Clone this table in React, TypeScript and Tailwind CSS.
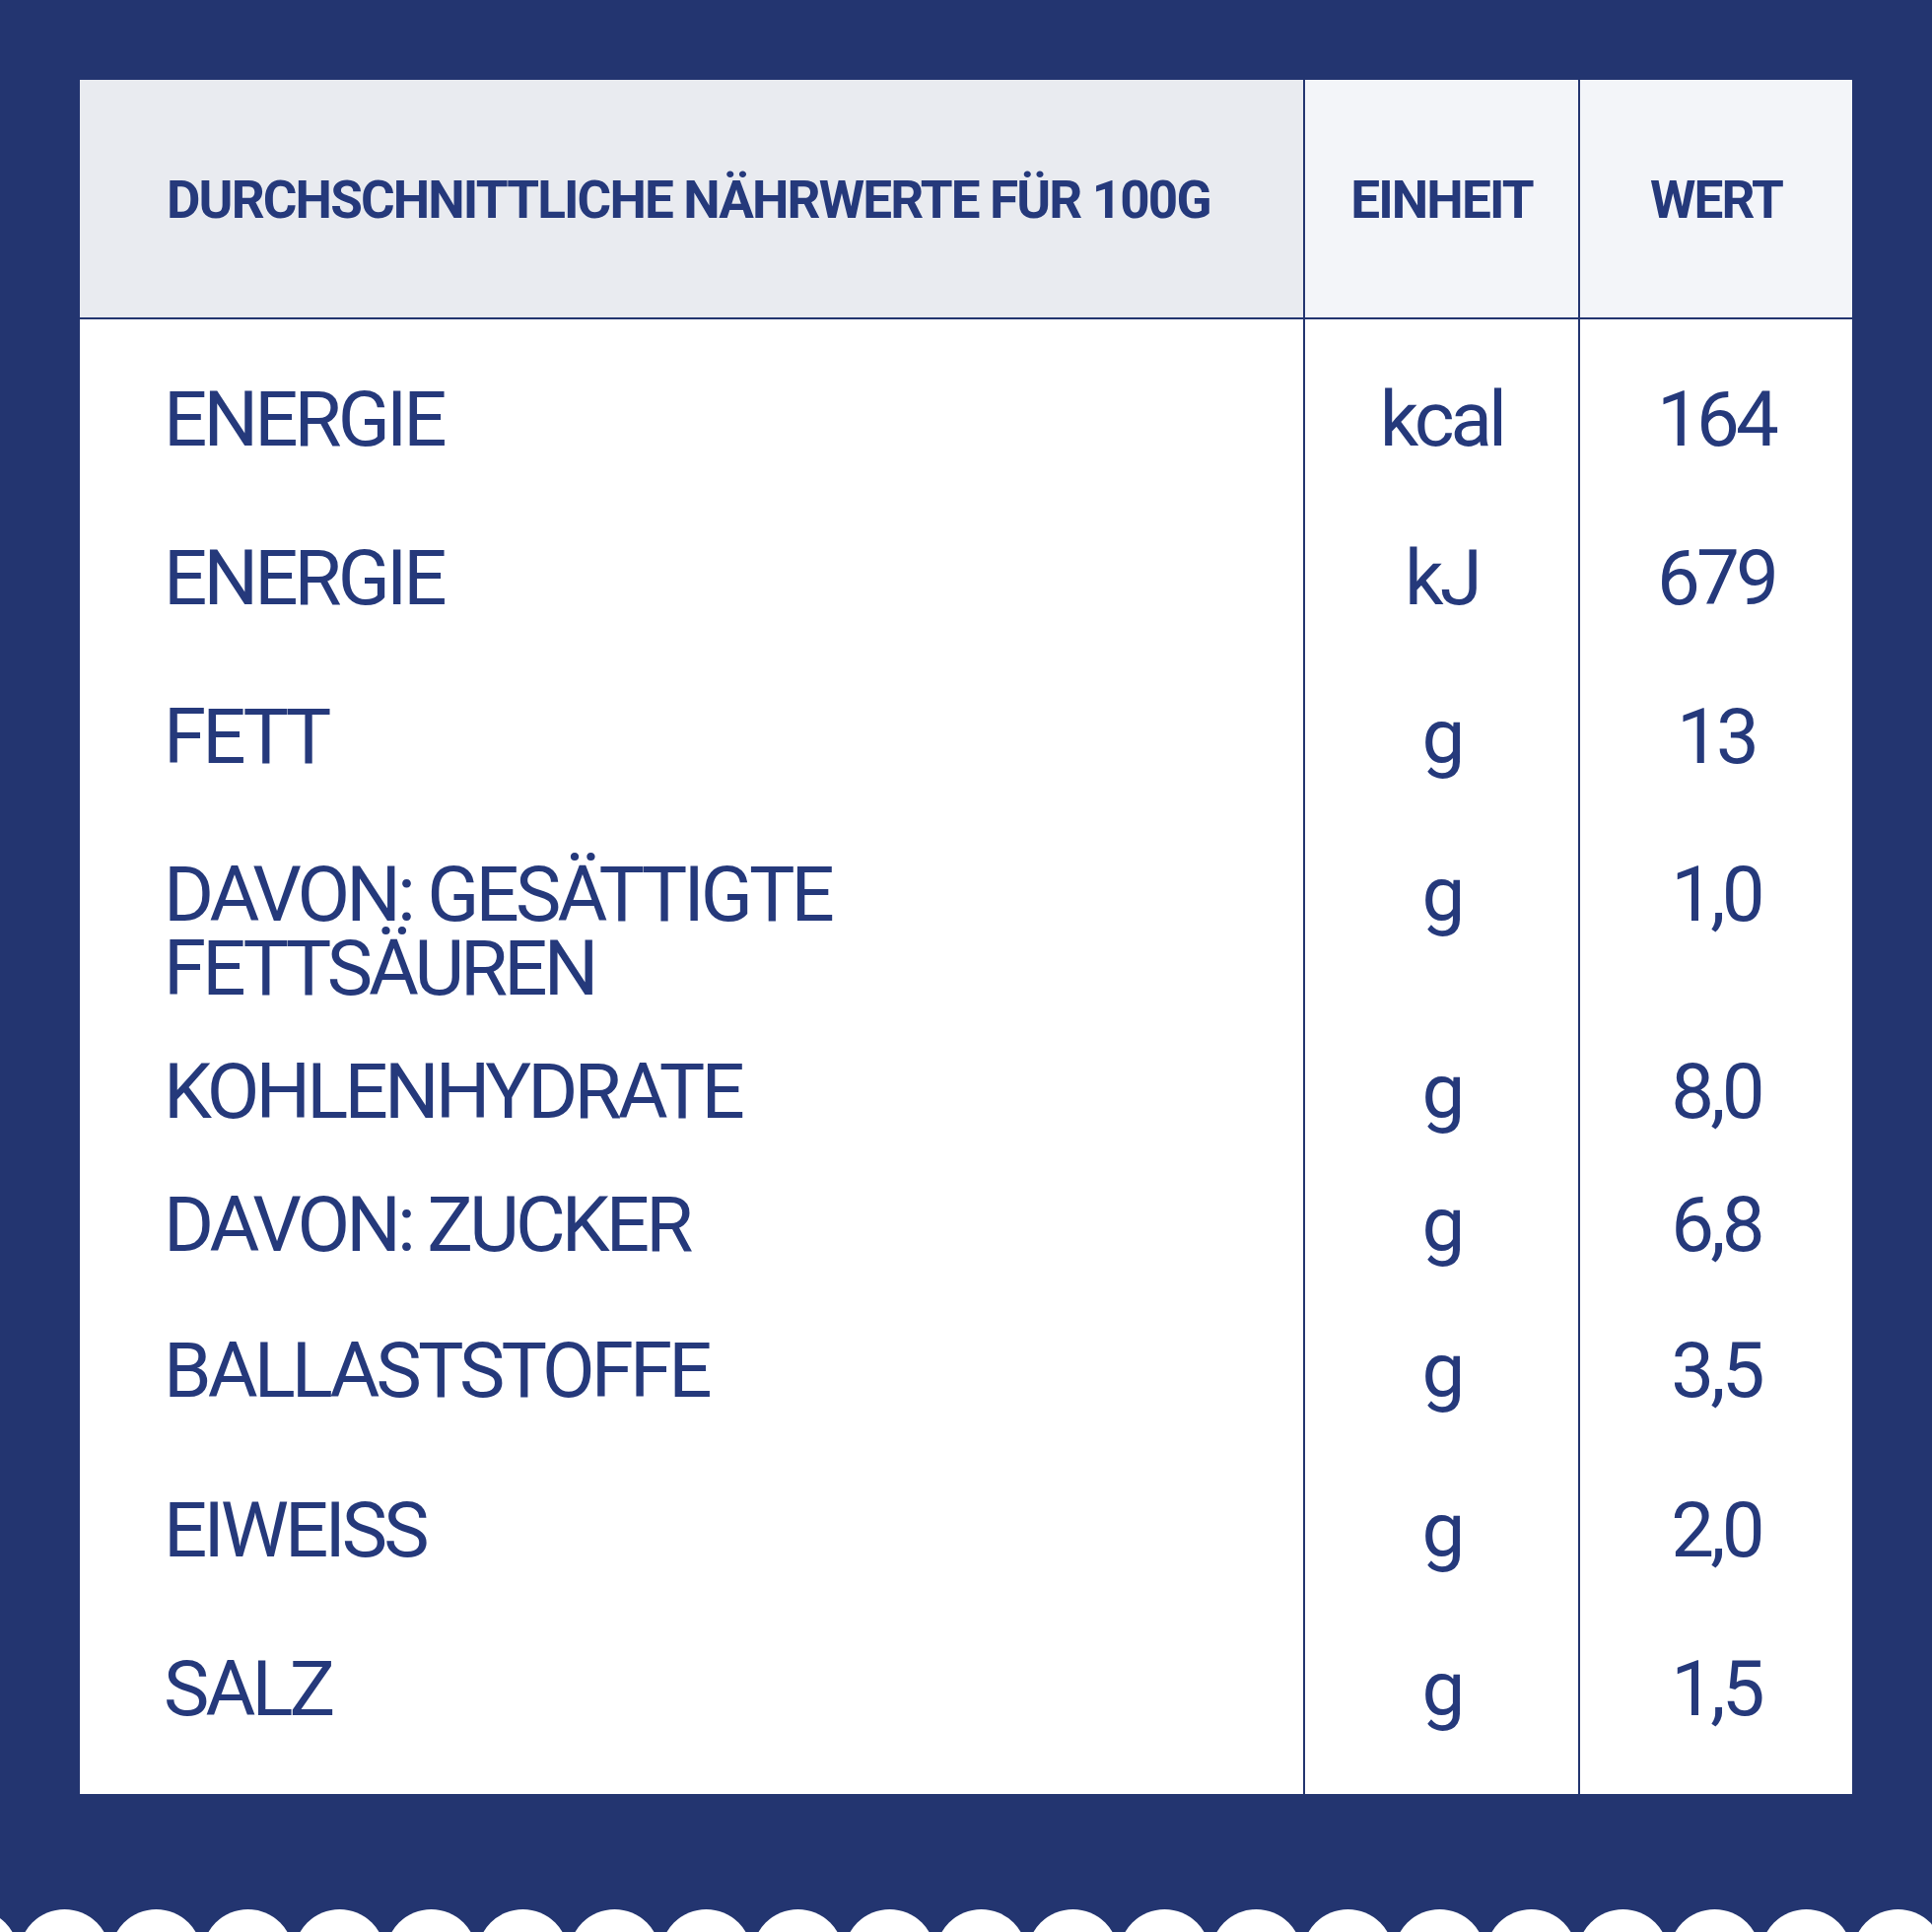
const navy = "text-[#25397b]"

type Row = {
  label: string[]
  unit: string
  value: string
  height: string
}

const rows: Row[] = [
  { label: ["ENERGIE"], unit: "kcal", value: "164", height: "h-[161px]" },
  { label: ["ENERGIE"], unit: "kJ", value: "679", height: "h-[161px]" },
  { label: ["FETT"], unit: "g", value: "13", height: "h-[160px]" },
  {
    label: ["DAVON: GESÄTTIGTE", "FETTSÄUREN"],
    unit: "g",
    value: "1,0",
    height: "h-[200px]"
  },
  { label: ["KOHLENHYDRATE"], unit: "g", value: "8,0", height: "h-[135px]" },
  { label: ["DAVON: ZUCKER"], unit: "g", value: "6,8", height: "h-[148px]" },
  { label: ["BALLASTSTOFFE"], unit: "g", value: "3,5", height: "h-[162px]" },
  { label: ["EIWEISS"], unit: "g", value: "2,0", height: "h-[161px]" },
  { label: ["SALZ"], unit: "g", value: "1,5", height: "h-[208px]" }
]

const Scallops = () => {
  const bumps = []
  for (let k = -1; k < 23; k++) {
    bumps.push(1879 - 93 * k - 46.5)
  }
  return (
    <svg
      width="1960"
      height="23"
      viewBox="0 0 1960 23"
      className="block"
      aria-hidden="true"
    >
      {bumps.map((cx) => (
        <circle key={cx} cx={cx} cy={46.3} r={46.3} fill="#ffffff" />
      ))}
    </svg>
  )
}

const HeaderCell = ({
  children,
  className
}: {
  children: React.ReactNode
  className?: string
}) => (
  <div className={`flex items-center h-full pt-[4px] ${className ?? ""}`}>
    <span
      className={`font-['Roboto',sans-serif] font-bold text-[53px] leading-none tracking-[-0.035em] whitespace-nowrap ${navy}`}
    >
      {children}
    </span>
  </div>
)

export default function App() {
  return (
    <div className="w-[1960px] h-[1960px] bg-[#233570] flex flex-col">
      <div className="pt-[81px] px-[81px]">
        <div className="bg-white h-[1739px] flex flex-col">
          {/* header */}
          <div className="grid grid-cols-[1241px_279px_278px] h-[243px] border-b-2 border-[#233570]">
            <HeaderCell className="bg-[#e9ebf0] pl-[88px]">
              DURCHSCHNITTLICHE NÄHRWERTE FÜR 100G
            </HeaderCell>
            <HeaderCell className="bg-[#f3f5f9] border-l-2 border-[#233570] justify-center">
              EINHEIT
            </HeaderCell>
            <HeaderCell className="bg-[#f3f5f9] border-l-2 border-[#233570] justify-center">
              WERT
            </HeaderCell>
          </div>

          {/* body */}
          <div className="flex flex-col">
            {rows.map((row, i) => (
              <div
                key={i}
                className={`grid grid-cols-[1241px_279px_278px] ${row.height} font-['Roboto',sans-serif] font-normal text-[78px] leading-[75px] tracking-[-0.05em] ${navy}`}
              >
                <div className="pl-[85px] pt-[64px] flex flex-col">
                  {row.label.map((l) => (
                    <span key={l}>{l}</span>
                  ))}
                </div>
                <div className="border-l-2 border-[#233570] pt-[64px] text-center">
                  {row.unit}
                </div>
                <div className="border-l-2 border-[#233570] pt-[64px] text-center">
                  {row.value}
                </div>
              </div>
            ))}
          </div>
        </div>
      </div>
      <div className="mt-auto">
        <Scallops />
      </div>
    </div>
  )
}
